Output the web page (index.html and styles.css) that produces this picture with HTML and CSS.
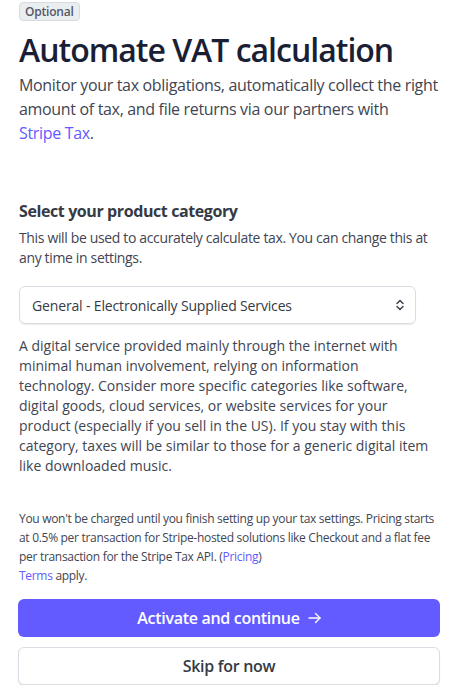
FILE: index.html
```html
<!DOCTYPE html>
<html lang="en">
<head>
<meta charset="utf-8">
<title>Automate VAT calculation</title>
<link rel="stylesheet" href="styles.css">
</head>
<body>
<main class="page">
  <header class="intro">
    <span class="badge">Optional</span>
    <h1 class="title">Automate VAT calculation</h1>
    <p class="lead">Monitor your tax obligations, automatically collect the right amount of tax, and file returns via our partners with <a class="link nowrap" href="#">Stripe Tax</a>.</p>
  </header>

  <section class="category">
    <h2 class="section-title">Select your product category</h2>
    <p class="section-text">This will be used to accurately calculate tax. You can change this at any time in settings.</p>
    <div class="select">
      <span class="select-value">General - Electronically Supplied Services</span>
      <svg class="select-icon" width="12" height="12" viewBox="0 0 12 12" fill="none" stroke="#414552" stroke-width="1.5" stroke-linecap="round" stroke-linejoin="round"><path d="M3 4.5L6 1.5L9 4.5"/><path d="M3 7.5L6 10.5L9 7.5"/></svg>
    </div>
    <p class="category-desc">A digital service provided mainly through the internet with minimal human involvement, relying on information technology. Consider more specific categories like software, digital goods, cloud services, or website services for your product (especially if you sell in the US). If you stay with this category, taxes will be similar to those for a generic digital item like downloaded music.</p>
  </section>

  <footer class="actions">
    <p class="fine">You won't be charged until you finish setting up your tax settings. Pricing starts at 0.5% per transaction for Stripe-hosted solutions like Checkout and a flat fee per transaction for the Stripe Tax API. (<a class="link" href="#">Pricing</a>)<br><a class="link" href="#">Terms</a> apply.</p>
    <button class="btn btn-primary">Activate and continue <svg class="arrow" width="13" height="12" viewBox="0 0 13 12" fill="none" stroke="#ffffff" stroke-width="1.4" stroke-linecap="round" stroke-linejoin="round"><path d="M1 6H12"/><path d="M7.5 1.5L12 6L7.5 10.5"/></svg></button>
    <button class="btn btn-secondary">Skip for now</button>
  </footer>
</main>
</body>
</html>
```
FILE: styles.css
```css
html, body {
  margin: 0;
  padding: 0;
  background: #ffffff;
}
body {
  font-family: "Open Sans", "Noto Sans", sans-serif;
  color: #414552;
}
.page {
  padding: 2px 30px 0 19px;
  display: flex;
  flex-direction: column;
}
.intro {
  display: flex;
  flex-direction: column;
  align-items: flex-start;
}
.badge {
  display: inline-block;
  font-size: 12px;
  line-height: 17px;
  font-weight: 600;
  letter-spacing: -0.2px;
  color: #545969;
  background: #ebeef1;
  border: 1px solid #d5dbe1;
  border-radius: 4px;
  padding: 0 5px;
}
.title {
  margin: 9px 0 0;
  font-size: 32px;
  line-height: 40px;
  font-weight: 600;
  letter-spacing: -1px;
  color: #1a1f36;
}
.lead {
  margin: 3px 0 0;
  font-size: 16px;
  line-height: 24px;
  letter-spacing: -0.33px;
  color: #414552;
}
.link {
  color: #635bff;
  text-decoration: none;
  font-weight: 500;
}
.nowrap {
  white-space: nowrap;
}
.category {
  margin-top: 54px;
  display: flex;
  flex-direction: column;
}
.section-title {
  margin: 0;
  font-size: 16px;
  line-height: 24px;
  font-weight: 700;
  letter-spacing: -0.4px;
  color: #353a44;
}
.section-text {
  margin: 5px 0 0;
  font-size: 14px;
  line-height: 20px;
  letter-spacing: -0.35px;
}
.select {
  margin-top: 18px;
  width: 397px;
  box-sizing: border-box;
  height: 38px;
  border: 1px solid #d8dee4;
  border-radius: 6px;
  box-shadow: 0 1px 1px rgba(0,0,0,0.08);
  display: flex;
  align-items: center;
  justify-content: space-between;
  padding: 0 9px 0 12px;
  font-size: 14px;
  font-weight: 500;
  letter-spacing: -0.15px;
  color: #353a44;
}
.category-desc {
  margin: 12px 0 0;
  width: 412px;
  font-size: 14px;
  line-height: 20px;
}
.actions {
  margin-top: 33px;
  display: flex;
  flex-direction: column;
}
.fine {
  margin: 0 0 14px;
  font-size: 12px;
  line-height: 19px;
  letter-spacing: -0.3px;
}
.btn {
  width: 422px;
  height: 38px;
  border-radius: 6px;
  font-family: inherit;
  font-size: 16px;
  font-weight: 600;
  letter-spacing: -0.3px;
  cursor: pointer;
  margin-left: -1px;
  display: flex;
  align-items: center;
  justify-content: center;
}
.btn-primary {
  background: #635bff;
  color: #ffffff;
  border: none;
}
.arrow {
  margin-left: 8px;
}
.btn-secondary {
  margin-top: 10px;
  background: #ffffff;
  color: #353a44;
  border: 1px solid #d8dee4;
  box-shadow: 0 1px 1px rgba(0,0,0,0.12);
}
```
